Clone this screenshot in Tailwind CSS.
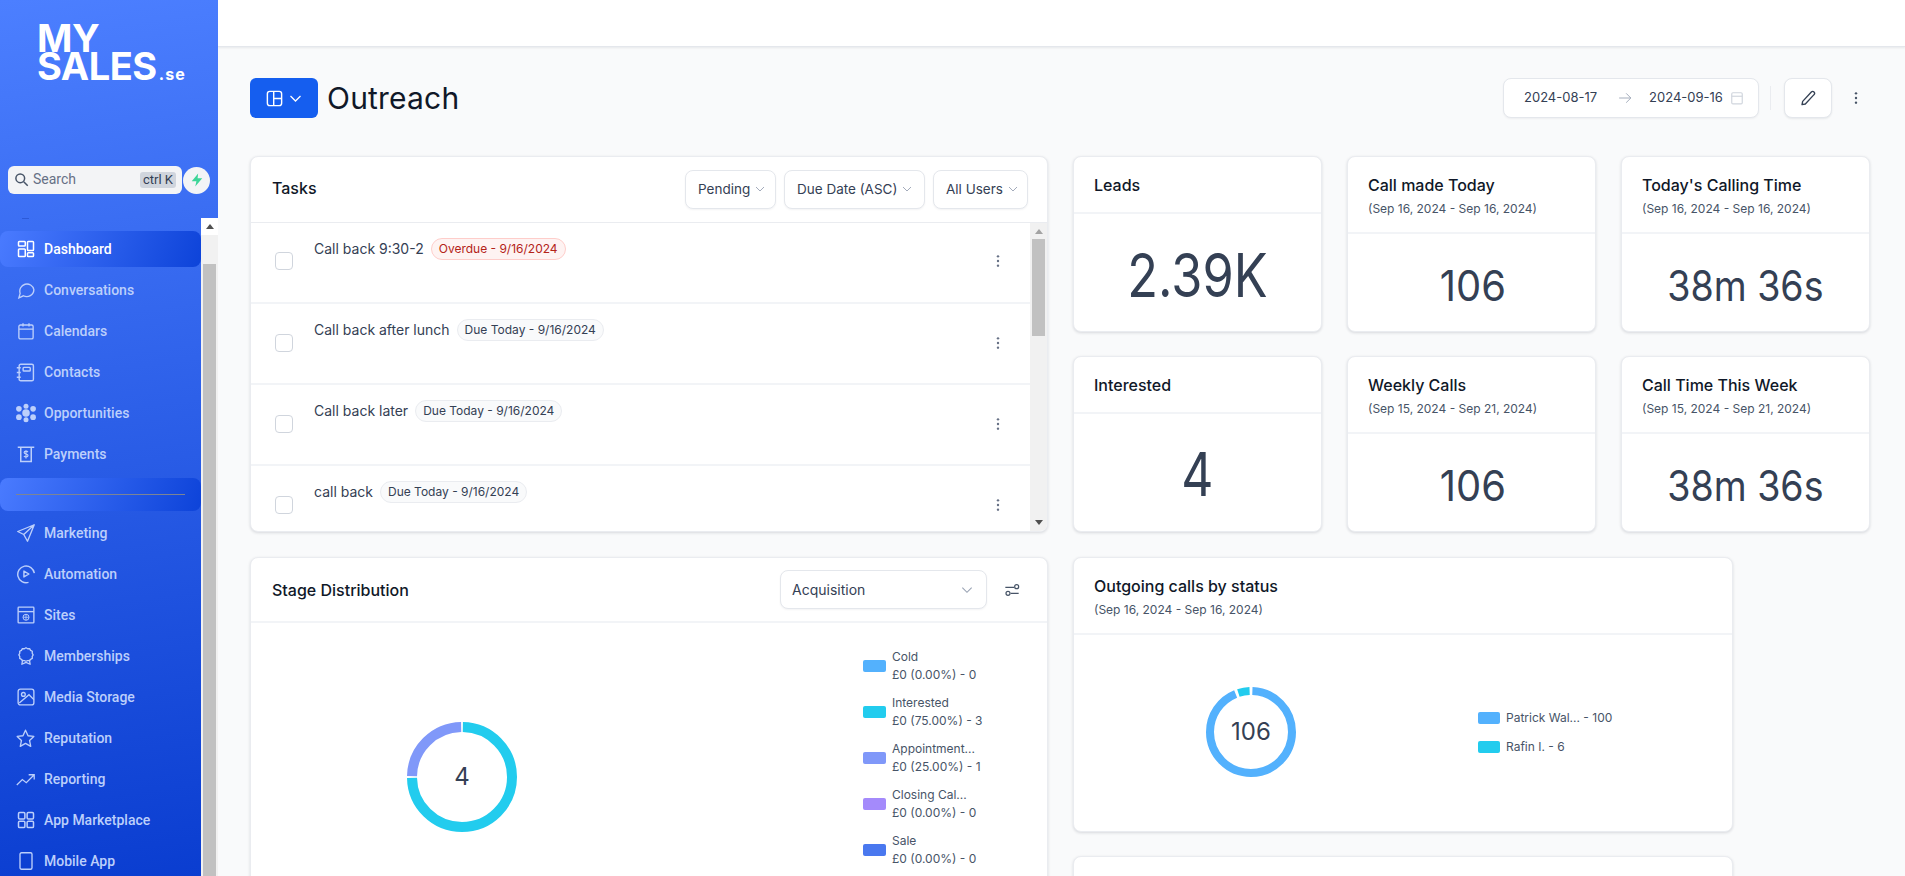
<!DOCTYPE html>
<html lang="en">
<head>
<meta charset="utf-8">
<title>Outreach</title>
<script src="https://cdn.jsdelivr.net/npm/@tailwindcss/browser@4"></script>
</head>
<body class="h-screen overflow-hidden bg-[#f9fafb] font-['Inter',sans-serif] text-[#344054]">
<div class="flex h-[876px] w-[1905px] overflow-hidden">
  <!-- Sidebar -->
  <aside class="flex h-full w-[218px] shrink-0 flex-col bg-[linear-gradient(172deg,#4c7fff_0%,#0a3dd0_100%)] font-['Roboto',sans-serif]">
    <div class="h-[166px] shrink-0 pl-[37px] pt-[24px] font-['Inter',sans-serif] text-[38px] font-bold leading-[28px] tracking-[-0.5px] text-white">MY<br>SALES<span class="ml-[2px] text-[16px] leading-[18px] tracking-[1.2px]">.se</span></div>
    <div class="flex h-[28px] shrink-0 items-center pl-[8px]">
      <div class="flex h-[28px] w-[174px] items-center rounded-md bg-[#f3f4f6] pb-[1px] pl-[6px] pr-[6px] text-[14px] text-[#667085]">
        <svg class="h-[15px] w-[15px] shrink-0 text-[#475467]" viewBox="0 0 24 24" fill="none" stroke="currentColor" stroke-width="2.4"><circle cx="10" cy="10" r="7"/><path d="M15.500 15.500 22 22"/></svg>
        <span class="ml-[4px]">Search</span>
        <span class="ml-auto flex h-[16px] items-center rounded-[3px] bg-[#d0d5dd] px-[3px] text-[13px] text-[#344054]">ctrl K</span>
      </div>
      <div class="ml-[1px] flex h-[27px] w-[27px] items-center justify-center rounded-full bg-[#f3f4f6]">
        <svg class="h-[14px] w-[14px]" viewBox="0 0 24 24" fill="#3dd598"><path d="M14 1 3 14h8l-2 9 12-14h-8z"/></svg>
      </div>
    </div>
    <div class="mt-[24px] flex min-h-0 flex-1">
      <nav class="w-[201px] shrink-0 overflow-hidden text-[14px] font-medium text-[#bccffb]">
        <div class="ml-[22px] h-px w-[7px] bg-[#2c5ad8]"></div>
        <a class="mt-[12px] flex h-[36px] items-center rounded-lg bg-[linear-gradient(110deg,#4a7bff_0%,#0d43d9_100%)] pl-[17px] text-white">
          <svg class="h-[18px] w-[18px] shrink-0" viewBox="0 0 24 24" fill="none" stroke="currentColor" stroke-width="2"><rect x="2" y="2" width="9" height="6" rx="1"/><rect x="14" y="2" width="8" height="12" rx="1"/><rect x="2" y="12" width="9" height="10" rx="1"/><rect x="14" y="17" width="8" height="5" rx="1"/></svg>
          <span class="ml-[9px]">Dashboard</span>
        </a>
        <a class="mt-[5px] flex h-[36px] items-center pl-[17px]">
          <svg class="h-[18px] w-[18px] shrink-0" viewBox="0 0 24 24" fill="none" stroke="currentColor" stroke-width="1.800"><path d="M22.500 11.500a9.500 9.500 0 0 1-14 8.200L2.500 22.500l1.700-6A9.500 9.500 0 1 1 22.500 11.500z"/></svg>
          <span class="ml-[9px]">Conversations</span>
        </a>
        <a class="mt-[5px] flex h-[36px] items-center pl-[17px]">
          <svg class="h-[18px] w-[18px] shrink-0" viewBox="0 0 24 24" fill="none" stroke="currentColor" stroke-width="1.800"><rect x="2.500" y="4" width="19" height="18.500" rx="2"/><path d="M2.500 9.500h19M8 1.500V6M16 1.500V6"/></svg>
          <span class="ml-[9px]">Calendars</span>
        </a>
        <a class="mt-[5px] flex h-[36px] items-center pl-[16px]">
          <svg class="h-[19px] w-[19px] shrink-0" viewBox="0 0 24 24" fill="none" stroke="currentColor" stroke-width="1.800"><rect x="4" y="1.500" width="18" height="21" rx="2"/><rect x="9" y="5.500" width="9" height="4.500" rx="1"/><path d="M1 6h5M1 12h5M1 18h5"/></svg>
          <span class="ml-[9px]">Contacts</span>
        </a>
        <a class="mt-[5px] flex h-[36px] items-center pl-[16px]">
          <svg class="h-[20px] w-[20px] shrink-0" viewBox="0 0 24 24" fill="currentColor"><circle cx="12" cy="12" r="4.500"/><circle cx="12" cy="4" r="3"/><circle cx="12" cy="20" r="3"/><circle cx="3.500" cy="7" r="3.400"/><circle cx="20.500" cy="7" r="3.400"/><circle cx="3.500" cy="17" r="3.400"/><circle cx="20.500" cy="17" r="3.400"/></svg>
          <span class="ml-[8px]">Opportunities</span>
        </a>
        <a class="mt-[5px] flex h-[36px] items-center pl-[17px]">
          <svg class="h-[18px] w-[18px] shrink-0" viewBox="0 0 24 24" fill="none" stroke="currentColor" stroke-width="2"><path d="M1 3h22M5 3v19h14V3"/><path d="M14.500 9.500c-.5-1-1.500-1.300-2.500-1.300-1.400 0-2.500.7-2.500 1.900 0 2.700 5.200 1.200 5.200 4 0 1.200-1.200 1.900-2.700 1.900-1.100 0-2.200-.5-2.700-1.400M12 7v11" stroke-width="1.600"/></svg>
          <span class="ml-[9px]">Payments</span>
        </a>
        <div class="mb-[-1px] mt-[6px] flex h-[33px] items-center rounded-lg bg-[linear-gradient(110deg,#4a7bff_0%,#0d43d9_100%)] px-[16px]">
          <div class="h-px w-full bg-[#7c8494]"></div>
        </div>
        <a class="mt-[5px] flex h-[36px] items-center pl-[17px]">
          <svg class="h-[18px] w-[18px] shrink-0" viewBox="0 0 24 24" fill="none" stroke="currentColor" stroke-width="1.800" stroke-linejoin="round"><path d="M23 1 1 10l8 4 5 9zM23 1 9 14"/></svg>
          <span class="ml-[9px]">Marketing</span>
        </a>
        <a class="mt-[5px] flex h-[36px] items-center pl-[16px]">
          <svg class="h-[20px] w-[20px] shrink-0" viewBox="0 0 24 24" fill="none" stroke="currentColor" stroke-width="1.700" stroke-linejoin="round"><path d="M22 11a10 10 0 1 0-7 11"/><path d="M9.500 8.500v7l6-3.500z"/></svg>
          <span class="ml-[8px]">Automation</span>
        </a>
        <a class="mt-[5px] flex h-[36px] items-center pl-[17px]">
          <svg class="h-[18px] w-[18px] shrink-0" viewBox="0 0 24 24" fill="none" stroke="currentColor" stroke-width="1.800"><rect x="1.500" y="1.500" width="21" height="21" rx="1"/><path d="M1.500 7.500h21"/><circle cx="12" cy="15" r="4" stroke-width="1.300"/><path d="M8 15h8M12 11v8" stroke-width="1.100"/></svg>
          <span class="ml-[9px]">Sites</span>
        </a>
        <a class="mt-[5px] flex h-[36px] items-center pl-[17px]">
          <svg class="h-[18px] w-[18px] shrink-0" viewBox="0 0 24 24" fill="none" stroke="currentColor" stroke-width="1.800" stroke-linejoin="round"><path d="M12 1l2.200 1.300 2.600-.1 1.300 2.200 2.300 1.300-.1 2.600 1.200 2.200-1.200 2.200.1 2.600-2.300 1.100-1.300 1.800-2.600-.1-2.200.9-2.200-.9-2.600.1-1.300-1.800-2.300-1.100.1-2.600-1.200-2.200 1.200-2.200-.1-2.600 2.300-1.300 1.300-2.200 2.600.1z"/><path d="M7.500 17 6.500 23l5.500-2.500 5.500 2.500-1-6"/></svg>
          <span class="ml-[9px]">Memberships</span>
        </a>
        <a class="mt-[5px] flex h-[36px] items-center pl-[17px]">
          <svg class="h-[18px] w-[18px] shrink-0" viewBox="0 0 24 24" fill="none" stroke="currentColor" stroke-width="1.800"><rect x="1.500" y="1.500" width="21" height="21" rx="3"/><circle cx="8.500" cy="8.500" r="2.500"/><path d="m3 20 13-11 6.500 6.500"/></svg>
          <span class="ml-[9px]">Media Storage</span>
        </a>
        <a class="mt-[5px] flex h-[36px] items-center pl-[16px]">
          <svg class="h-[19px] w-[19px] shrink-0" viewBox="0 0 24 24" fill="none" stroke="currentColor" stroke-width="1.700" stroke-linejoin="round"><path d="m12 1.500 3.200 7 7.300.9-5.400 5 1.500 7.600-6.600-3.800L5.400 22l1.500-7.600-5.400-5 7.300-.9z"/></svg>
          <span class="ml-[9px]">Reputation</span>
        </a>
        <a class="mt-[5px] flex h-[36px] items-center pl-[16px]">
          <svg class="h-[19px] w-[19px] shrink-0" viewBox="0 0 24 24" fill="none" stroke="currentColor" stroke-width="1.600"><path d="m1 19 7-7 5 4 10-10M16 6h7v6"/></svg>
          <span class="ml-[9px]">Reporting</span>
        </a>
        <a class="mt-[5px] flex h-[36px] items-center pl-[17px]">
          <svg class="h-[18px] w-[18px] shrink-0" viewBox="0 0 24 24" fill="none" stroke="currentColor" stroke-width="2"><rect x="2" y="2" width="8.500" height="8.500" rx="1.500"/><rect x="13.500" y="2" width="8.500" height="8.500" rx="1.500"/><rect x="2" y="13.500" width="8.500" height="8.500" rx="1.500"/><rect x="13.500" y="13.500" width="8.500" height="8.500" rx="1.500"/></svg>
          <span class="ml-[9px]">App Marketplace</span>
        </a>
        <a class="mt-[5px] flex h-[36px] items-center pl-[17px]">
          <svg class="h-[18px] w-[18px] shrink-0" viewBox="0 0 24 24" fill="none" stroke="currentColor" stroke-width="1.800"><rect x="4" y="1" width="16" height="22" rx="2"/><path d="M12 18.500h.01" stroke-width="2.200"/></svg>
          <span class="ml-[9px]">Mobile App</span>
        </a>
      </nav>
      <div class="flex w-[17px] shrink-0 flex-col bg-[#f1f1f1] px-[2px]">
        <div class="-mx-[2px] flex h-[17px] shrink-0 items-center justify-center bg-white"><span class="h-0 w-0 border-x-[4px] border-b-[5px] border-x-transparent border-b-[#505050]"></span></div>
        <div class="mt-[29px] flex-1 bg-[#c1c1c1]"></div>
      </div>
    </div>
  </aside>

  <!-- Main -->
  <main class="h-full min-w-0 flex-1 overflow-hidden">
    <div class="h-[47px] border-b border-[#e4e7ec] bg-white shadow-[0_1px_2px_rgba(16,24,40,.08)]"></div>
    <div class="pl-[32px] pr-[41px]">
      <!-- Page header -->
      <header class="mt-[31px] flex h-[40px] items-center justify-between">
        <div class="flex items-center">
          <button class="flex h-[40px] w-[68px] items-center justify-center gap-[4px] rounded-md bg-[#155eef] text-white">
            <svg class="h-[19px] w-[19px]" viewBox="0 0 24 24" fill="none" stroke="currentColor" stroke-width="1.800"><rect x="3" y="3" width="18" height="18" rx="3"/><path d="M11 3v18M11 12h10"/></svg>
            <svg class="h-[15px] w-[15px]" viewBox="0 0 24 24" fill="none" stroke="currentColor" stroke-width="2"><path d="m4 8 8 8 8-8"/></svg>
          </button>
          <h1 class="ml-[9px] text-[30px] font-normal leading-[40px] tracking-[0.2px] text-[#101828]">Outreach</h1>
        </div>
        <div class="flex items-center">
          <div class="flex h-[40px] w-[256px] items-center whitespace-nowrap rounded-lg border border-[#e4e7ec] bg-white pl-[20px] text-[13px] text-[#344054] shadow-[0_1px_2px_rgba(16,24,40,.05)]">
            <span>2024-08-17</span>
            <svg class="ml-[21px] h-[14px] w-[14px] text-[#98a2b3]" viewBox="0 0 24 24" fill="none" stroke="currentColor" stroke-width="1.500"><path d="M2 12h20M14 4l8 8-8 8"/></svg>
            <span class="ml-[17px]">2024-09-16</span>
            <svg class="ml-[7px] h-[14px] w-[14px] text-[#d0d5dd]" viewBox="0 0 24 24" fill="none" stroke="currentColor" stroke-width="2"><rect x="3" y="3" width="18" height="19" rx="2"/><path d="M3 9h18"/></svg>
          </div>
          <div class="ml-[11px] mr-[13px] h-[24px] w-px bg-[#eaecf0]"></div>
          <button class="flex h-[40px] w-[48px] items-center justify-center rounded-lg border border-[#e4e7ec] bg-white shadow-[0_1px_2px_rgba(16,24,40,.08)]">
            <svg class="h-[16px] w-[16px] text-[#344054]" viewBox="0 0 24 24" fill="none" stroke="currentColor" stroke-width="2" stroke-linejoin="round"><path d="M17 3a2.800 2.800 0 0 1 4 4L8 21l-5 1 1-5z"/></svg>
          </button>
          <svg class="ml-[16px] h-[16px] w-[16px] text-[#475467]" viewBox="0 0 24 24" fill="currentColor"><circle cx="12" cy="5" r="1.800"/><circle cx="12" cy="12" r="1.800"/><circle cx="12" cy="19" r="1.800"/></svg>
        </div>
      </header>

      <div class="mt-[38px] flex items-start gap-[25px]">
        <!-- Left column -->
        <div class="flex w-[798px] shrink-0 flex-col gap-[25px]">
          <section class="flex h-[376px] flex-col overflow-hidden rounded-lg border border-[#eaecf0] bg-white shadow-[0_1px_3px_rgba(16,24,40,.14)]">
            <div class="flex h-[66px] shrink-0 items-center justify-between border-b border-[#eaecf0] pl-[21px] pr-[19px]">
              <h2 class="pb-[3px] text-[16px] font-[450] text-[#101828]">Tasks</h2>
              <div class="mb-[1px] flex gap-[8px] text-[13.5px] text-[#344054]">
                <div class="flex h-[39px] w-[91px] items-center rounded-lg border border-[#e4e7ec] bg-white pl-[12px] shadow-[0_1px_2px_rgba(16,24,40,.05)]">Pending<svg class="ml-[4px] h-[12px] w-[12px] text-[#98a2b3]" viewBox="0 0 24 24" fill="none" stroke="currentColor" stroke-width="1.800"><path d="m4 8 8 8 8-8"/></svg></div>
                <div class="flex h-[39px] w-[141px] items-center rounded-lg border border-[#e4e7ec] bg-white pl-[12px] shadow-[0_1px_2px_rgba(16,24,40,.05)]">Due Date (ASC)<svg class="ml-[4px] h-[12px] w-[12px] text-[#98a2b3]" viewBox="0 0 24 24" fill="none" stroke="currentColor" stroke-width="1.800"><path d="m4 8 8 8 8-8"/></svg></div>
                <div class="flex h-[39px] w-[95px] items-center rounded-lg border border-[#e4e7ec] bg-white pl-[12px] shadow-[0_1px_2px_rgba(16,24,40,.05)]">All Users<svg class="ml-[4px] h-[12px] w-[12px] text-[#98a2b3]" viewBox="0 0 24 24" fill="none" stroke="currentColor" stroke-width="1.800"><path d="m4 8 8 8 8-8"/></svg></div>
              </div>
            </div>
            <div class="flex min-h-0 flex-1">
              <div class="min-w-0 flex-1 overflow-hidden">
                <div class="flex h-[81px] items-start border-b-2 border-[#f2f4f7] px-[24px]">
                  <span class="mt-[29px] h-[18px] w-[18px] shrink-0 rounded-[4px] border border-[#d0d5dd]"></span>
                  <span class="ml-[21px] mt-[16px] text-[14px] leading-[20px] text-[#344054]">Call back 9:30-2</span>
                  <span class="ml-[7px] mt-[15px] flex h-[22px] items-center rounded-full border border-[#fecdca] bg-[#fef3f2] px-[7px] text-[12px] text-[#b42318]">Overdue - 9/16/2024</span>
                  <svg class="ml-auto mt-[30px] h-[16px] w-[16px] text-[#667085]" viewBox="0 0 24 24" fill="currentColor"><circle cx="12" cy="5" r="1.800"/><circle cx="12" cy="12" r="1.800"/><circle cx="12" cy="19" r="1.800"/></svg>
                </div>
                <div class="flex h-[81px] items-start border-b-2 border-[#f2f4f7] px-[24px]">
                  <span class="mt-[30px] h-[18px] w-[18px] shrink-0 rounded-[4px] border border-[#d0d5dd]"></span>
                  <span class="ml-[21px] mt-[16px] text-[14px] leading-[20px] text-[#344054]">Call back after lunch</span>
                  <span class="ml-[7px] mt-[15px] flex h-[22px] items-center rounded-full border border-[#eaecf0] bg-[#f9fafb] px-[7px] text-[12px] text-[#344054]">Due Today - 9/16/2024</span>
                  <svg class="ml-auto mt-[31px] h-[16px] w-[16px] text-[#667085]" viewBox="0 0 24 24" fill="currentColor"><circle cx="12" cy="5" r="1.800"/><circle cx="12" cy="12" r="1.800"/><circle cx="12" cy="19" r="1.800"/></svg>
                </div>
                <div class="flex h-[81px] items-start border-b-2 border-[#f2f4f7] px-[24px]">
                  <span class="mt-[30px] h-[18px] w-[18px] shrink-0 rounded-[4px] border border-[#d0d5dd]"></span>
                  <span class="ml-[21px] mt-[16px] text-[14px] leading-[20px] text-[#344054]">Call back later</span>
                  <span class="ml-[7px] mt-[15px] flex h-[22px] items-center rounded-full border border-[#eaecf0] bg-[#f9fafb] px-[7px] text-[12px] text-[#344054]">Due Today - 9/16/2024</span>
                  <svg class="ml-auto mt-[31px] h-[16px] w-[16px] text-[#667085]" viewBox="0 0 24 24" fill="currentColor"><circle cx="12" cy="5" r="1.800"/><circle cx="12" cy="12" r="1.800"/><circle cx="12" cy="19" r="1.800"/></svg>
                </div>
                <div class="flex h-[81px] items-start px-[24px]">
                  <span class="mt-[30px] h-[18px] w-[18px] shrink-0 rounded-[4px] border border-[#d0d5dd]"></span>
                  <span class="ml-[21px] mt-[16px] text-[14px] leading-[20px] text-[#344054]">call back</span>
                  <span class="ml-[7px] mt-[15px] flex h-[22px] items-center rounded-full border border-[#eaecf0] bg-[#f9fafb] px-[7px] text-[12px] text-[#344054]">Due Today - 9/16/2024</span>
                  <svg class="ml-auto mt-[31px] h-[16px] w-[16px] text-[#667085]" viewBox="0 0 24 24" fill="currentColor"><circle cx="12" cy="5" r="1.800"/><circle cx="12" cy="12" r="1.800"/><circle cx="12" cy="19" r="1.800"/></svg>
                </div>
              </div>
              <div class="flex w-[17px] shrink-0 flex-col bg-[#f1f1f1] px-[2px]">
                <div class="flex h-[16px] shrink-0 items-center justify-center"><span class="h-0 w-0 border-x-[4px] border-b-[5px] border-x-transparent border-b-[#a3a3a3]"></span></div>
                <div class="h-[97px] shrink-0 bg-[#c1c1c1]"></div>
                <div class="mt-auto flex h-[17px] shrink-0 items-center justify-center"><span class="h-0 w-0 border-x-[4px] border-t-[5px] border-x-transparent border-t-[#505050]"></span></div>
              </div>
            </div>
          </section>

          <section class="h-[500px] rounded-lg border border-[#eaecf0] bg-white shadow-[0_1px_3px_rgba(16,24,40,.14)]">
            <div class="flex h-[65px] items-center border-b-2 border-[#f2f4f7] pl-[21px]">
              <h2 class="text-[16px] font-[450] text-[#101828]">Stage Distribution</h2>
              <div class="ml-auto flex h-[39px] w-[207px] items-center justify-between rounded-lg border border-[#e4e7ec] bg-white pl-[11px] pr-[12px] text-[14px] text-[#344054] shadow-[0_1px_2px_rgba(16,24,40,.05)]">Acquisition<svg class="h-[14px] w-[14px] text-[#98a2b3]" viewBox="0 0 24 24" fill="none" stroke="currentColor" stroke-width="1.800"><path d="m4 8 8 8 8-8"/></svg></div>
              <svg class="ml-[17px] mr-[27px] h-[16px] w-[16px] text-[#475467]" viewBox="0 0 24 24" fill="none" stroke="currentColor" stroke-width="1.800"><path d="M2 8h13M10 17h12"/><circle cx="19" cy="7" r="3"/><circle cx="6" cy="17" r="3"/></svg>
            </div>
            <div class="flex items-start">
              <div class="relative ml-[156px] mt-[99px] h-[110px] w-[110px] shrink-0">
                <svg class="h-full w-full -rotate-90" viewBox="0 0 110 110" fill="none" stroke-width="10">
                  <circle cx="55" cy="55" r="50" stroke="#22ccee" pathLength="360" stroke-dasharray="268 92" stroke-dashoffset="-1"/>
                  <circle cx="55" cy="55" r="50" stroke="#8098f9" pathLength="360" stroke-dasharray="88 272" stroke-dashoffset="-271"/>
                </svg>
                <span class="absolute inset-0 flex items-center justify-center text-[24px] text-[#344054]">4</span>
              </div>
              <ul class="ml-[346px] mt-[25px] flex flex-col gap-[10px] text-[12px] leading-[18px] text-[#475467]">
                <li class="flex items-center gap-[6px]"><span class="h-[12px] w-[23px] shrink-0 rounded-[2px] bg-[#53b1fd]"></span><span>Cold<br>£0 (0.00%) - 0</span></li>
                <li class="flex items-center gap-[6px]"><span class="h-[12px] w-[23px] shrink-0 rounded-[2px] bg-[#22ccee]"></span><span>Interested<br>£0 (75.00%) - 3</span></li>
                <li class="flex items-center gap-[6px]"><span class="h-[12px] w-[23px] shrink-0 rounded-[2px] bg-[#8098f9]"></span><span>Appointment...<br>£0 (25.00%) - 1</span></li>
                <li class="flex items-center gap-[6px]"><span class="h-[12px] w-[23px] shrink-0 rounded-[2px] bg-[#a48afb]"></span><span>Closing Cal...<br>£0 (0.00%) - 0</span></li>
                <li class="flex items-center gap-[6px]"><span class="h-[12px] w-[23px] shrink-0 rounded-[2px] bg-[#4a78ef]"></span><span>Sale<br>£0 (0.00%) - 0</span></li>
              </ul>
            </div>
          </section>
        </div>

        <!-- Right column -->
        <div class="flex min-w-0 flex-1 flex-col gap-[25px]">
          <div class="grid w-[797px] grid-cols-[249px_249px_249px] gap-x-[25px] gap-y-[24px] [grid-auto-rows:176px]">
            <article class="flex flex-col rounded-lg border border-[#eaecf0] bg-white shadow-[0_1px_3px_rgba(16,24,40,.14)]">
              <div class="h-[57px] shrink-0 border-b-2 border-[#f2f4f7] pl-[20px] pt-[16px]"><h3 class="text-[16px] font-[450] leading-[24px] text-[#101828]">Leads</h3></div>
              <div class="flex flex-1 items-center justify-center pt-[5px] text-[60px] text-[#344054]"><span class="inline-block scale-x-[.84]">2.39K</span></div>
            </article>
            <article class="flex flex-col rounded-lg border border-[#eaecf0] bg-white shadow-[0_1px_3px_rgba(16,24,40,.14)]">
              <div class="h-[77px] shrink-0 border-b-2 border-[#f2f4f7] pl-[20px] pt-[16px]"><h3 class="text-[16px] font-[450] leading-[24px] text-[#101828]">Call made Today</h3><p class="mt-[3px] text-[12px] leading-[18px] text-[#475467]">(Sep 16, 2024 - Sep 16, 2024)</p></div>
              <div class="flex flex-1 items-center justify-center pl-[2px] pt-[5px] text-[42px] text-[#344054]"><span class="inline-block scale-x-[.95]">106</span></div>
            </article>
            <article class="flex flex-col rounded-lg border border-[#eaecf0] bg-white shadow-[0_1px_3px_rgba(16,24,40,.14)]">
              <div class="h-[77px] shrink-0 border-b-2 border-[#f2f4f7] pl-[20px] pt-[16px]"><h3 class="text-[16px] font-[450] leading-[24px] text-[#101828]">Today's Calling Time</h3><p class="mt-[3px] text-[12px] leading-[18px] text-[#475467]">(Sep 16, 2024 - Sep 16, 2024)</p></div>
              <div class="flex flex-1 items-center justify-center pt-[5px] text-[42px] text-[#344054]"><span class="inline-block scale-x-[.895]">38m 36s</span></div>
            </article>
            <article class="flex flex-col rounded-lg border border-[#eaecf0] bg-white shadow-[0_1px_3px_rgba(16,24,40,.14)]">
              <div class="h-[57px] shrink-0 border-b-2 border-[#f2f4f7] pl-[20px] pt-[16px]"><h3 class="text-[16px] font-[450] leading-[24px] text-[#101828]">Interested</h3></div>
              <div class="flex flex-1 items-center justify-center pt-[3px] text-[60px] text-[#344054]"><span class="inline-block scale-x-[.83]">4</span></div>
            </article>
            <article class="flex flex-col rounded-lg border border-[#eaecf0] bg-white shadow-[0_1px_3px_rgba(16,24,40,.14)]">
              <div class="h-[77px] shrink-0 border-b-2 border-[#f2f4f7] pl-[20px] pt-[16px]"><h3 class="text-[16px] font-[450] leading-[24px] text-[#101828]">Weekly Calls</h3><p class="mt-[3px] text-[12px] leading-[18px] text-[#475467]">(Sep 15, 2024 - Sep 21, 2024)</p></div>
              <div class="flex flex-1 items-center justify-center pl-[2px] pt-[5px] text-[42px] text-[#344054]"><span class="inline-block scale-x-[.95]">106</span></div>
            </article>
            <article class="flex flex-col rounded-lg border border-[#eaecf0] bg-white shadow-[0_1px_3px_rgba(16,24,40,.14)]">
              <div class="h-[77px] shrink-0 border-b-2 border-[#f2f4f7] pl-[20px] pt-[16px]"><h3 class="text-[16px] font-[450] leading-[24px] text-[#101828]">Call Time This Week</h3><p class="mt-[3px] text-[12px] leading-[18px] text-[#475467]">(Sep 15, 2024 - Sep 21, 2024)</p></div>
              <div class="flex flex-1 items-center justify-center pt-[5px] text-[42px] text-[#344054]"><span class="inline-block scale-x-[.895]">38m 36s</span></div>
            </article>
          </div>

          <article class="h-[275px] w-[660px] rounded-lg border border-[#eaecf0] bg-white shadow-[0_1px_3px_rgba(16,24,40,.14)]">
            <div class="h-[77px] border-b-2 border-[#f2f4f7] pl-[20px] pt-[16px]"><h3 class="text-[16px] font-[450] leading-[24px] text-[#101828]">Outgoing calls by status</h3><p class="mt-[3px] text-[12px] leading-[18px] text-[#475467]">(Sep 16, 2024 - Sep 16, 2024)</p></div>
            <div class="flex items-start">
              <div class="relative ml-[132px] mt-[52px] h-[90px] w-[90px] shrink-0">
                <svg class="h-full w-full -rotate-90" viewBox="0 0 90 90" fill="none" stroke-width="8">
                  <circle cx="45" cy="45" r="41" stroke="#53b1fd" pathLength="360" stroke-dasharray="336 24" stroke-dashoffset="-2"/>
                  <circle cx="45" cy="45" r="41" stroke="#22ccee" pathLength="360" stroke-dasharray="16 344" stroke-dashoffset="-342"/>
                </svg>
                <span class="absolute inset-0 flex items-center justify-center text-[24px] text-[#344054]">106</span>
              </div>
              <ul class="ml-[182px] mt-[74px] flex flex-col gap-[11px] text-[12px] leading-[18px] text-[#475467]">
                <li class="flex items-center gap-[6px]"><span class="h-[12px] w-[22px] shrink-0 rounded-[2px] bg-[#53b1fd]"></span>Patrick Wal... - 100</li>
                <li class="flex items-center gap-[6px]"><span class="h-[12px] w-[22px] shrink-0 rounded-[2px] bg-[#22ccee]"></span>Rafin I. - 6</li>
              </ul>
            </div>
          </article>

          <article class="-mt-[1px] h-[200px] w-[660px] rounded-lg border border-[#eaecf0] bg-white shadow-[0_1px_3px_rgba(16,24,40,.14)]"></article>
        </div>
      </div>
    </div>
  </main>
</div>
</body>
</html>
